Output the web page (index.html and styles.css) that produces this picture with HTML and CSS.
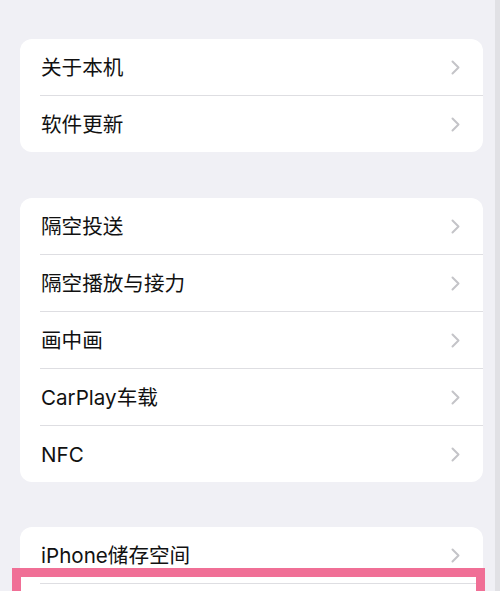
FILE: index.html
```html
<!DOCTYPE html>
<html lang="zh-CN">
<head>
<meta charset="utf-8">
<link rel="stylesheet" href="styles.css">
</head>
<body>
<div class="screen">
  <div class="content">
    <div class="card">
      <div class="row"><span class="label">关于本机</span><svg class="chev" viewBox="0 0 9 15"><path d="M1.5 1.5 L7.5 7.5 L1.5 13.5"/></svg></div>
      <div class="sep"></div>
      <div class="row"><span class="label">软件更新</span><svg class="chev" viewBox="0 0 9 15"><path d="M1.5 1.5 L7.5 7.5 L1.5 13.5"/></svg></div>
    </div>
    <div class="card">
      <div class="row"><span class="label">隔空投送</span><svg class="chev" viewBox="0 0 9 15"><path d="M1.5 1.5 L7.5 7.5 L1.5 13.5"/></svg></div>
      <div class="sep"></div>
      <div class="row"><span class="label">隔空播放与接力</span><svg class="chev" viewBox="0 0 9 15"><path d="M1.5 1.5 L7.5 7.5 L1.5 13.5"/></svg></div>
      <div class="sep"></div>
      <div class="row"><span class="label">画中画</span><svg class="chev" viewBox="0 0 9 15"><path d="M1.5 1.5 L7.5 7.5 L1.5 13.5"/></svg></div>
      <div class="sep"></div>
      <div class="row"><span class="label">CarPlay车载</span><svg class="chev" viewBox="0 0 9 15"><path d="M1.5 1.5 L7.5 7.5 L1.5 13.5"/></svg></div>
      <div class="sep"></div>
      <div class="row"><span class="label">NFC</span><svg class="chev" viewBox="0 0 9 15"><path d="M1.5 1.5 L7.5 7.5 L1.5 13.5"/></svg></div>
    </div>
    <div class="card last">
      <div class="row"><span class="label">iPhone储存空间</span><svg class="chev" viewBox="0 0 9 15"><path d="M1.5 1.5 L7.5 7.5 L1.5 13.5"/></svg></div>
      <div class="sep"></div>
      <div class="row"><span class="label"></span></div>
      <div class="highlight"></div>
    </div>
  </div>
  <div class="edge"></div>
</div>
</body>
</html>
```
FILE: styles.css
```css
html, body {
  margin: 0;
  padding: 0;
  height: 100%;
  overflow: hidden;
}
body {
  background: #f0f0f5;
  font-family: "Inter", "Noto Sans CJK SC", sans-serif;
  color: #111;
}
.screen {
  display: flex;
  height: 591px;
}
.content {
  flex: 1;
  padding: 39px 12px 0 20px;
  display: flex;
  flex-direction: column;
  gap: 46px;
}
.edge {
  width: 5px;
  background: #e1e1e5;
}
.card {
  background: #fff;
  border-radius: 12px;
  display: flex;
  flex-direction: column;
  flex-shrink: 0;
}
.card.last {
  position: relative;
  margin-top: -1px;
  border-radius: 12px 12px 0 0;
}
.row {
  height: 56px;
  display: flex;
  align-items: center;
  justify-content: space-between;
  padding: 0 23px 0 21px;
}
.label {
  font-size: 20.6px;
  letter-spacing: 0;
  line-height: 1;
  padding-top: 2px;
}
.sep {
  height: 1px;
  background: #dedee2;
  margin-left: 20px;
}
.chev {
  width: 9px;
  height: 15px;
  fill: none;
  stroke: #c4c4c8;
  stroke-width: 2;
  stroke-linecap: round;
  stroke-linejoin: round;
}
.highlight {
  position: absolute;
  left: -8px;
  right: -2px;
  top: 41px;
  height: 80px;
  border: 9px solid #f06f96;
  box-sizing: border-box;
}
```
